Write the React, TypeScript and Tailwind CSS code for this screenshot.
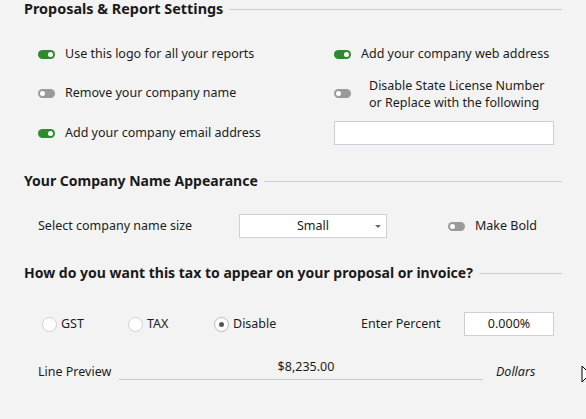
import React from "react";

function Toggle({ on }: { on?: boolean }) {
  return (
    <span
      className={`flex h-[9px] w-[17px] shrink-0 items-center rounded-full px-[2px] ${
        on ? "justify-end bg-[#2f8a2f]" : "justify-start bg-[#9a9a9a]"
      }`}
    >
      <span className="h-[5px] w-[5px] rounded-full bg-white" />
    </span>
  );
}

function Radio({ label, checked }: { label: string; checked?: boolean }) {
  return (
    <div className="flex items-center gap-[4px]">
      <span
        className={`flex h-[15px] w-[15px] items-center justify-center rounded-full border bg-white ${
          checked ? "border-[#b8b8c4]" : "border-[#d0d0d8]"
        }`}
      >
        {checked && <span className="h-[5px] w-[5px] rounded-full bg-[#555]" />}
      </span>
      <span>{label}</span>
    </div>
  );
}

function Heading({ children, big }: { children: React.ReactNode; big?: boolean }) {
  return (
    <div className="flex items-center gap-[6px] pl-[24px] pr-[24px]">
      <h2
        className={`font-bold text-[#1a1a1a] ${
          big ? "text-[14.4px] leading-[18px]" : "text-[14px] leading-[20px]"
        }`}
      >
        {children}
      </h2>
      <div className="h-px flex-1 bg-[#cdcdd8]" />
    </div>
  );
}

export default function App() {
  return (
    <div
      className="relative h-[419px] w-[586px] overflow-hidden bg-[#f3f3f3] text-[12.5px] text-[#1c1c1c]"
      style={{ fontFamily: '"Segoe UI", "Noto Sans", "Open Sans", sans-serif' }}
    >
      {/* Proposals & Report Settings */}
      <Heading big>Proposals &amp; Report Settings</Heading>

      <div className="mt-[17px] grid grid-cols-[296px_1fr] pl-[38px]">
        <div className="flex h-[39px] items-center gap-[10px]">
          <Toggle on />
          <span>Use this logo for all your reports</span>
        </div>
        <div className="flex h-[39px] items-center gap-[10px]">
          <Toggle on />
          <span>Add your company web address</span>
        </div>

        <div className="flex h-[39px] items-center gap-[10px]">
          <Toggle />
          <span>Remove your company name</span>
        </div>
        <div className="flex h-[39px] items-center gap-[18px]">
          <Toggle />
          <span className="leading-[17px]">
            Disable State License Number
            <br />
            or Replace with the following
          </span>
        </div>

        <div className="flex h-[40px] items-center gap-[10px]">
          <Toggle on />
          <span>Add your company email address</span>
        </div>
        <div className="flex h-[40px] items-center">
          <div className="h-[24px] w-[220px] border border-[#cfcfdc] bg-white" />
        </div>
      </div>

      {/* Your Company Name Appearance */}
      <div className="mt-[18px]">
        <Heading>Your Company Name Appearance</Heading>
      </div>

      <div className="mt-[23px] flex h-[24px] items-center pl-[38px]">
        <span className="w-[201px]">Select company name size</span>
        <div className="relative flex h-[24px] w-[148px] items-center justify-center border border-[#cfcfdc] bg-white">
          <span>Small</span>
          <span className="absolute right-[5px] top-[10px] h-0 w-0 border-x-[3px] border-t-[3px] border-x-transparent border-t-[#666]" />
        </div>
        <div className="ml-[61px] flex items-center gap-[10px]">
          <Toggle />
          <span>Make Bold</span>
        </div>
      </div>

      {/* Tax */}
      <div className="mt-[25px]">
        <Heading>How do you want this tax to appear on your proposal or invoice?</Heading>
      </div>

      <div className="mt-[29px] flex h-[24px] items-center pl-[42px]">
        <div className="w-[86px]">
          <Radio label="GST" />
        </div>
        <div className="w-[86px]">
          <Radio label="TAX" />
        </div>
        <div className="w-[147px]">
          <Radio label="Disable" checked />
        </div>
        <span className="w-[103px]">Enter Percent</span>
        <div className="flex h-[24px] w-[90px] items-center justify-center border border-[#cfcfdc] bg-white">
          0.000%
        </div>
      </div>

      <div className="mt-[22px] flex items-end pl-[38px]">
        <span className="w-[81px] leading-[17px]">Line Preview</span>
        <div className="w-[364px] border-b border-[#c8c8d4] pb-[4px] pl-[10px] text-center leading-[17px]">
          $8,235.00
        </div>
        <span className="ml-[13px] italic leading-[17px]">Dollars</span>
      </div>

      {/* mouse cursor at the edge */}
      <svg className="absolute left-[581px] top-[365px]" width="12" height="20" viewBox="0 0 12 20">
        <path d="M1 1 L1 17 L5 13 L8 19 L10 18 L7 12 L12 12 Z" fill="#fff" stroke="#000" strokeWidth="1" />
      </svg>
    </div>
  );
}
